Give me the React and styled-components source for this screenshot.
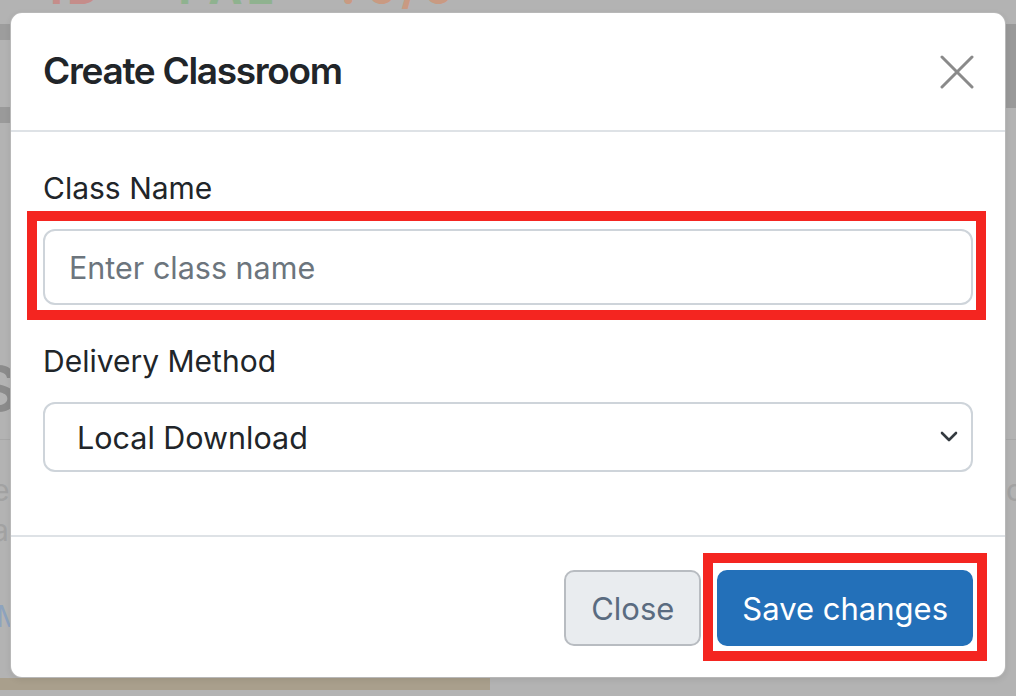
import React from "react";
import styled, { createGlobalStyle } from "styled-components";

const GlobalStyle = createGlobalStyle`
  html, body { margin: 0; padding: 0; }
  body {
    background: #b3b3b3;
    font-family: Inter, "Noto Sans", "Liberation Sans", sans-serif;
    color: #212529;
  }
  * { box-sizing: border-box; }
`;

/* ---------- dimmed page behind the modal ---------- */
const Page = styled.div`
  position: relative;
  width: 1016px;
  height: 696px;
  overflow: hidden;
  background: #b3b3b3;
  display: flex;
  flex-direction: column;
`;

const BrandRow = styled.div`
  height: 10px;
  overflow: hidden;
  display: flex;
  align-items: flex-end;
  padding-left: 50px;
  font-size: 46px;
  font-weight: 700;
  line-height: 46px;
`;

const BrandWord = styled.span`
  color: ${(p) => p.$color};
  margin-right: ${(p) => p.$gap}px;
  letter-spacing: 4px;
`;

const HeroBand = styled.div`
  margin-top: 14px;
  height: 99px;
  display: grid;
  grid-template-columns: 1fr 1fr;
`;

const HeroLeft = styled.div`
  background: linear-gradient(
    #9d9d9d 0 16px,
    #b3b3b3 16px 83px,
    #9a9a9a 83px 99px
  );
`;

const HeroRight = styled.div`
  background: linear-gradient(#999999 0 84px, #b3b3b3 84px);
`;

const Heading = styled.div`
  margin-top: 238px;
  height: 56px;
  font-size: 62px;
  font-weight: 600;
  line-height: 56px;
  color: #8b8b8b;
  white-space: nowrap;
  margin-left: -22px;
`;

const Divider = styled.div`
  margin-top: 22px;
  height: 1px;
  background: #a7a7a7;
`;

const FaintRow = styled.div`
  display: flex;
  justify-content: space-between;
  height: 40px;
  margin-top: ${(p) => p.$top || 0}px;
  font-size: 30px;
  line-height: 40px;
  color: ${(p) => p.$color || "#a2a2a2"};
  white-space: nowrap;
`;

const FaintText = styled.span`
  margin-left: ${(p) => p.$ml || 0}px;
  margin-right: ${(p) => p.$mr || 0}px;
`;

const TanBar = styled.div`
  margin-top: auto;
  margin-bottom: 6px;
  width: 490px;
  height: 12px;
  background: #a99f8c;
`;

/* ---------- modal ---------- */
const Backdrop = styled.div`
  position: absolute;
  inset: 0;
  padding: 12px 10px 0;
`;

const Dialog = styled.div`
  width: 996px;
  height: 666px;
  background: #ffffff;
  border: 1px solid rgba(0, 0, 0, 0.28);
  border-radius: 12px;
  display: flex;
  flex-direction: column;
  box-shadow: 0 2px 6px rgba(0, 0, 0, 0.08);
`;

const Header = styled.div`
  height: 119px;
  flex: none;
  display: flex;
  align-items: center;
  justify-content: space-between;
  padding: 0 31px 0 32px;
  border-bottom: 2px solid #dee2e6;
`;

const Title = styled.h5`
  margin: 0;
  font-size: 37px;
  font-weight: 600;
  line-height: 1.2;
  letter-spacing: -1.3px;
  color: #212529;
`;

const CloseX = styled.button`
  width: 34px;
  height: 34px;
  padding: 0;
  border: 0;
  background: transparent;
  display: flex;
  align-items: center;
  justify-content: center;
  cursor: pointer;
`;

const Body = styled.div`
  flex: 1;
  padding: 34px 32px 0;
  display: flex;
  flex-direction: column;
`;

const Field = styled.div`
  margin-bottom: ${(p) => p.$mb || 0}px;
  display: flex;
  flex-direction: column;
`;

const Label = styled.label`
  font-size: 30px;
  line-height: 45px;
  margin-bottom: 18px;
  color: #212529;
`;

const Marked = styled.div`
  position: relative;
`;

const Highlight = styled.div`
  position: absolute;
  top: ${(p) => p.$t}px;
  right: ${(p) => p.$r}px;
  bottom: ${(p) => p.$b}px;
  left: ${(p) => p.$l}px;
  border: 10px solid #f42520;
  pointer-events: none;
`;

const Input = styled.input`
  display: block;
  width: 100%;
  height: 76px;
  padding: 0 24px;
  font-family: inherit;
  font-size: 30.5px;
  color: #212529;
  background: #fff;
  border: 2px solid #ced4da;
  border-radius: 12px;
  outline: none;
  &::placeholder {
    color: #6c757d;
    opacity: 1;
  }
`;

const SelectBox = styled.div`
  height: 70px;
  display: flex;
  align-items: center;
  justify-content: space-between;
  padding: 0 12px 0 32px;
  border: 2px solid #ced4da;
  border-radius: 12px;
  font-size: 30.5px;
  color: #212529;
  background: #fff;
`;

const Footer = styled.div`
  flex: none;
  display: flex;
  justify-content: flex-end;
  align-items: center;
  gap: 16px;
  padding: 33px 32px 31px;
  border-top: 2px solid #dee2e6;
`;

const Button = styled.button`
  height: 76px;
  padding: 0 ${(p) => (p.$primary ? 23 : 25)}px;
  font-family: inherit;
  font-size: 31px;
  border-radius: 10px;
  cursor: pointer;
  border: 2px solid ${(p) => (p.$primary ? "#2370b9" : "#b8bcc1")};
  background: ${(p) => (p.$primary ? "#2370b9" : "#e9ecef")};
  color: ${(p) => (p.$primary ? "#ffffff" : "#5a6b80")};
`;

function XIcon() {
  return (
    <svg width="34" height="34" viewBox="0 0 34 34" aria-hidden="true">
      <path
        d="M2 2 L32 32 M32 2 L2 32"
        stroke="#8a8a8a"
        strokeWidth="3"
        strokeLinecap="round"
        fill="none"
      />
    </svg>
  );
}

function Chevron() {
  return (
    <svg width="20" height="12" viewBox="0 0 20 12" aria-hidden="true">
      <path
        d="M3 2 L10 9 L17 2"
        stroke="#343a40"
        strokeWidth="2.6"
        strokeLinecap="round"
        strokeLinejoin="round"
        fill="none"
      />
    </svg>
  );
}

export default function App() {
  return (
    <>
      <GlobalStyle />
      <Page>
        <BrandRow>
          <BrandWord $color="#c58d8a" $gap={74}>ID</BrandWord>
          <BrandWord $color="#8fb28f" $gap={58}>PAE</BrandWord>
          <BrandWord $color="#c99a82" $gap={0}>?0/0</BrandWord>
        </BrandRow>
        <HeroBand>
          <HeroLeft />
          <HeroRight />
        </HeroBand>
        <Heading>Ss</Heading>
        <Divider />
        <FaintRow $top={30}>
          <FaintText $ml={-8}>e</FaintText>
          <FaintText $mr={-8}>o</FaintText>
        </FaintRow>
        <FaintRow $top={0}>
          <FaintText $ml={-8}>a</FaintText>
        </FaintRow>
        <FaintRow $top={46} $color="#8ea3be">
          <FaintText $ml={-4}>M</FaintText>
        </FaintRow>
        <TanBar />

        <Backdrop>
          <Dialog role="dialog" aria-labelledby="dlg-title">
            <Header>
              <Title id="dlg-title">Create Classroom</Title>
              <CloseX aria-label="Close">
                <XIcon />
              </CloseX>
            </Header>
            <Body>
              <Field $mb={34}>
                <Label htmlFor="className">Class Name</Label>
                <Marked>
                  <Input id="className" placeholder="Enter class name" />
                  <Highlight $t={-18} $r={-13} $b={-15} $l={-16} />
                </Marked>
              </Field>
              <Field>
                <Label>Delivery Method</Label>
                <SelectBox role="combobox" aria-expanded="false">
                  <span>Local Download</span>
                  <Chevron />
                </SelectBox>
              </Field>
            </Body>
            <Footer>
              <Button>Close</Button>
              <Marked>
                <Button $primary>Save changes</Button>
                <Highlight $t={-17} $r={-14} $b={-15} $l={-14} />
              </Marked>
            </Footer>
          </Dialog>
        </Backdrop>
      </Page>
    </>
  );
}
